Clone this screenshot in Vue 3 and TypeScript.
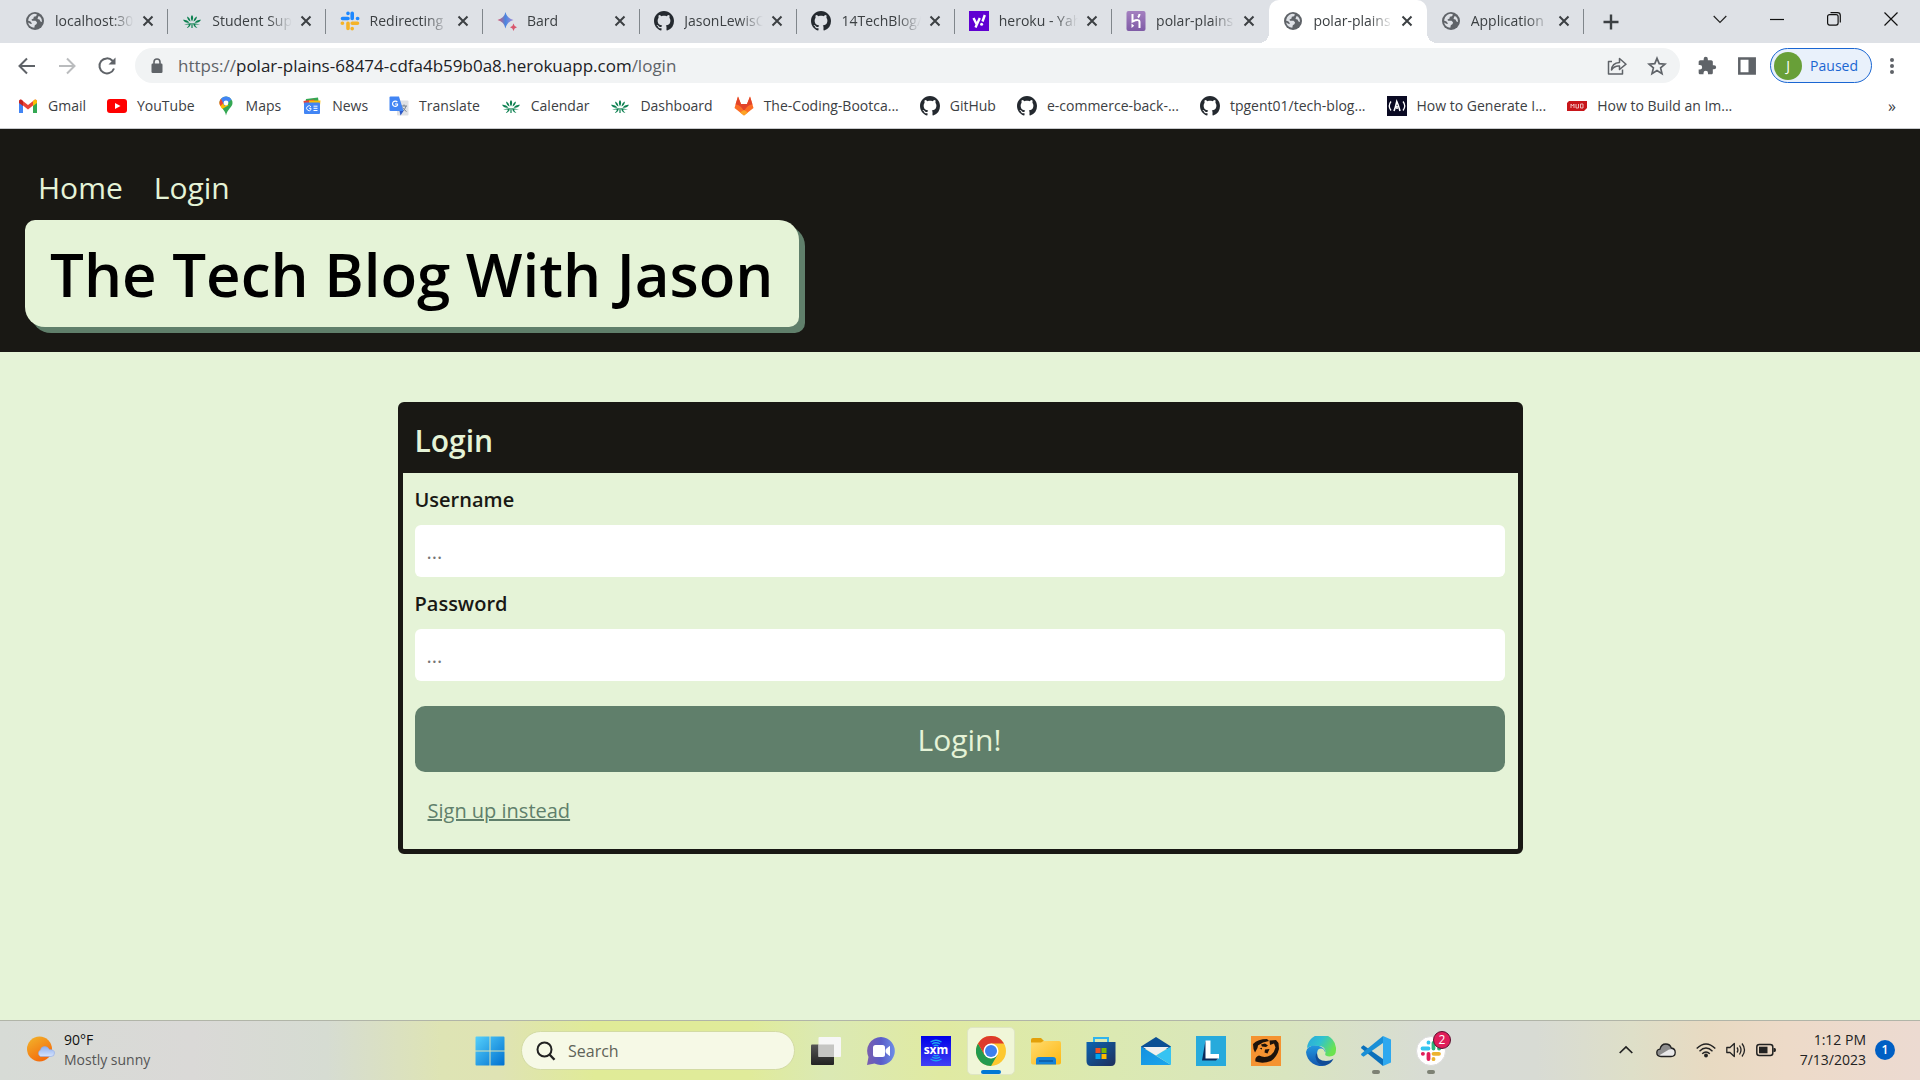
<script setup lang="ts">
import { ref } from 'vue'

interface Tab {
  title: string
  icon: string
  active?: boolean
}

interface Bookmark {
  label: string
  icon: string
}

interface TaskbarApp {
  name: string
  icon: string
  state?: 'focused' | 'running'
  badge?: number
}

const tabs: Tab[] = [
  { title: 'localhost:30', icon: 'globe' },
  { title: 'Student Sup', icon: 'lotus' },
  { title: 'Redirecting', icon: 'slack-loading' },
  { title: 'Bard', icon: 'bard' },
  { title: 'JasonLewisC', icon: 'github' },
  { title: '14TechBlog/', icon: 'github' },
  { title: 'heroku - Yah', icon: 'yahoo' },
  { title: 'polar-plains', icon: 'heroku' },
  { title: 'polar-plains', icon: 'globe', active: true },
  { title: 'Application', icon: 'globe' },
]

const bookmarks: Bookmark[] = [
  { label: 'Gmail', icon: 'gmail' },
  { label: 'YouTube', icon: 'youtube' },
  { label: 'Maps', icon: 'maps' },
  { label: 'News', icon: 'news' },
  { label: 'Translate', icon: 'translate' },
  { label: 'Calendar', icon: 'lotus' },
  { label: 'Dashboard', icon: 'lotus' },
  { label: 'The-Coding-Bootca...', icon: 'gitlab' },
  { label: 'GitHub', icon: 'github' },
  { label: 'e-commerce-back-...', icon: 'github' },
  { label: 'tpgent01/tech-blog...', icon: 'github' },
  { label: 'How to Generate I...', icon: 'fcc' },
  { label: 'How to Build an Im...', icon: 'muo' },
]

const apps: TaskbarApp[] = [
  { name: 'Task view', icon: 'taskview' },
  { name: 'Chat', icon: 'chat' },
  { name: 'SiriusXM', icon: 'sxm' },
  { name: 'Chrome', icon: 'chrome', state: 'focused' },
  { name: 'File Explorer', icon: 'explorer' },
  { name: 'Microsoft Store', icon: 'store' },
  { name: 'Mail', icon: 'mail' },
  { name: 'L', icon: 'lapp' },
  { name: 'Strong arm', icon: 'strong' },
  { name: 'Edge', icon: 'edge' },
  { name: 'VS Code', icon: 'vscode', state: 'running' },
  { name: 'Slack', icon: 'slack', state: 'running', badge: 2 },
]

const username = ref('')
const password = ref('')
</script>

<template>
  <div class="screen">
    <svg class="sprite" aria-hidden="true">
      <defs>
        <linearGradient id="g-bard" x1="0" y1="0" x2="1" y2="0">
          <stop offset="0" stop-color="#e0566a" /><stop offset=".5" stop-color="#4a86e0" /><stop offset="1" stop-color="#a78bd8" />
        </linearGradient>
        <linearGradient id="g-heroku" x1="0" y1="0" x2="0" y2="1">
          <stop offset="0" stop-color="#a480c0" /><stop offset="1" stop-color="#7f5ba6" />
        </linearGradient>
        <linearGradient id="g-win" x1="0" y1="0" x2="1" y2="1">
          <stop offset="0" stop-color="#55d0fb" /><stop offset="1" stop-color="#0070d0" />
        </linearGradient>
        <linearGradient id="g-sun" x1="0" y1="0" x2=".6" y2="1">
          <stop offset="0" stop-color="#f2b62c" /><stop offset="1" stop-color="#f46a0c" />
        </linearGradient>
        <linearGradient id="g-cloud" x1="0" y1="0" x2="0" y2="1">
          <stop offset="0" stop-color="#8fb0f0" /><stop offset="1" stop-color="#d5e2fb" />
        </linearGradient>
        <linearGradient id="g-chat" x1="0" y1="0" x2="1" y2="0">
          <stop offset="0" stop-color="#7a5fae" /><stop offset=".5" stop-color="#5a5cc8" /><stop offset="1" stop-color="#6d8ee8" />
        </linearGradient>
        <linearGradient id="g-sxm" x1="0" y1="0" x2="0" y2="1">
          <stop offset="0" stop-color="#0000e8" /><stop offset="1" stop-color="#4040f4" />
        </linearGradient>
        <linearGradient id="g-folder" x1="0" y1="0" x2="1" y2="1">
          <stop offset="0" stop-color="#ffdb6e" /><stop offset="1" stop-color="#fdb813" />
        </linearGradient>
        <linearGradient id="g-store" x1="0" y1="0" x2="1" y2="1">
          <stop offset="0" stop-color="#0c64b0" /><stop offset="1" stop-color="#1f2f5c" />
        </linearGradient>
        <linearGradient id="g-mail" x1="0" y1="0" x2="1" y2="1">
          <stop offset="0" stop-color="#1490df" /><stop offset="1" stop-color="#1aa6ec" />
        </linearGradient>
        <linearGradient id="g-edge-top" x1="0" y1="0" x2="1" y2=".5">
          <stop offset="0" stop-color="#2aa5de" /><stop offset=".5" stop-color="#30c2cf" /><stop offset="1" stop-color="#6be34f" />
        </linearGradient>
        <linearGradient id="g-edge-left" x1="0" y1="0" x2="0" y2="1">
          <stop offset="0" stop-color="#2398e0" /><stop offset="1" stop-color="#1256ae" />
        </linearGradient>
        <linearGradient id="g-dark" x1="0" y1="0" x2="0" y2="1">
          <stop offset="0" stop-color="#555" /><stop offset="1" stop-color="#222" />
        </linearGradient>
      </defs>

      <symbol id="i-globe" viewBox="0 0 20 20">
        <circle cx="10" cy="10" r="9" fill="#5f6368" />
        <path d="M4 6.500Q6 3 10 2.800L12 3.500 11 5.200 8.800 5.800 8.500 7.600 6.500 8.500 7 9.700H10.500L12 11.200 11.600 13 9.800 14.200 9.300 16.800Q4.500 16.500 3 11.500L6 13 7 12.500 5.500 10.500 3 9.500ZM13.300 5.200L15 5.500Q17.400 8 17 11L15.500 10.500 14.500 8.500 12.500 8Z" fill="#dee1e6" />
      </symbol>
      <symbol id="i-lotus" viewBox="0 0 20 20">
        <g fill="#0c8050">
          <path d="M10 4Q12.300 6.500 10 10.500Q7.700 6.500 10 4ZM5 5.500Q8 6.500 8.500 10.500Q5.500 9.500 5 5.500ZM15 5.500Q12 6.500 11.500 10.500Q14.500 9.500 15 5.500ZM1 8.700Q5 8.200 7.500 11.500Q3 12.500 1 8.700ZM19 8.700Q15 8.200 12.500 11.500Q17 12.500 19 8.700Z" />
          <path d="M2 13.800Q6 12 9 12.300Q8.500 16.500 4.500 17Q6.800 15 7 13.700Q5 13.500 2 13.800ZM18 13.800Q14 12 11 12.300Q11.500 16.500 15.500 17Q13.200 15 13 13.700Q15 13.500 18 13.800ZM9.400 12H10.600V17H9.400Z" />
        </g>
      </symbol>
      <symbol id="i-slack-loading" viewBox="0 0 20 20">
        <g stroke-width="3.600" stroke-linecap="round">
          <path d="M8 2.300V2.500M8 7.500H2.500M12.200 2.300V7.500M17.500 7.500H17.700" stroke="#1e88ff" />
          <path d="M2.300 12.300H2.500M8 12.300V17.500M12.200 12.300H17.500M12.200 17.500V17.700" stroke="#f5b328" />
        </g>
      </symbol>
      <symbol id="i-bard" viewBox="0 0 20 20">
        <path d="M8.500 1Q9.800 7.200 16.500 9Q9.800 10.800 8.500 17.500Q7.200 10.800 .5 9Q7.200 7.200 8.500 1Z" fill="url(#g-bard)" />
        <path d="M16.500 12.500Q17 15.500 20 16.200Q17 17 16.500 20Q16 17 13 16.200Q16 15.500 16.500 12.500Z" fill="#d8566c" />
      </symbol>
      <symbol id="i-github" viewBox="0 0 16 16">
        <path fill="#24292f" d="M8 0C3.580 0 0 3.580 0 8c0 3.540 2.290 6.530 5.470 7.590.4.070.55-.17.55-.38 0-.19-.01-.82-.01-1.490-2.010.37-2.530-.49-2.690-.94-.09-.23-.48-.94-.82-1.130-.28-.15-.68-.52-.01-.53.63-.01 1.080.58 1.230.82.72 1.210 1.870.87 2.330.66.07-.52.28-.87.51-1.070-1.780-.2-3.640-.89-3.640-3.950 0-.87.31-1.590.82-2.150-.08-.2-.36-1.020.08-2.120 0 0 .67-.21 2.200.82.64-.18 1.320-.27 2-.27s1.360.09 2 .27c1.530-1.040 2.200-.82 2.200-.82.44 1.100.16 1.920.08 2.120.51.56.82 1.270.82 2.150 0 3.070-1.870 3.750-3.650 3.950.29.25.54.73.54 1.480 0 1.070-.01 1.930-.01 2.200 0 .21.15.46.55.38A8.010 8.010 0 0 0 16 8c0-4.420-3.580-8-8-8z" />
      </symbol>
      <symbol id="i-yahoo" viewBox="0 0 20 20">
        <rect width="20" height="20" fill="#6001d2" />
        <path d="M4.500 7L7.500 13M10.800 7L6.500 16.500M15.800 4L13.500 10.500" stroke="#fff" stroke-width="2.400" fill="none" />
        <circle cx="12.600" cy="13.300" r="1.500" fill="#fff" />
      </symbol>
      <symbol id="i-heroku" viewBox="0 0 20 20">
        <rect x=".5" width="19" height="20" rx="2" fill="url(#g-heroku)" />
        <path d="M6.500 3V10.500Q13.500 7.500 13.500 11V17M13.500 3Q13.500 5 12 6.500" stroke="#fff" stroke-width="2" fill="none" />
        <path d="M5.500 12.500L8.200 14.800 5.500 17Z" fill="#fff" />
      </symbol>
      <symbol id="i-gmail" viewBox="0 0 20 20">
        <path d="M1 5V17H5V9Z" fill="#4285f4" /><path d="M19 5V17H15V9Z" fill="#34a853" />
        <path d="M1 5.500Q1 3.500 3 3.500L10 9 17 3.500Q19 3.500 19 5.500L15 9.500 10 13.500 5 9.500Z" fill="#ea4335" />
        <path d="M15 5L17 3.500Q19 3.500 19 5.500V7L15 10Z" fill="#fbbc04" /><path d="M1 5.500Q1 3.500 3 3.500L5 5V10L1 7Z" fill="#c5221f" />
      </symbol>
      <symbol id="i-youtube" viewBox="0 0 20 20">
        <rect y="3" width="20" height="14" rx="3" fill="#f00" /><path d="M8 7L13.500 10 8 13Z" fill="#fff" />
      </symbol>
      <symbol id="i-maps" viewBox="0 0 20 20">
        <path d="M10 .5A6.500 6.500 0 0 1 16.500 7C16.500 11.500 11.500 12.500 10 19.500C9.500 16.500 8 14.500 6.300 12.300L3.500 7A6.500 6.500 0 0 1 10 .5Z" fill="#34a853" />
        <path d="M5 2.800L12.500 9.200 6.300 13C4.800 11 3.500 9.300 3.500 7A6.500 6.500 0 0 1 5 2.800Z" fill="#fbbc04" />
        <path d="M5 2.800L8.500 6 4.500 10Q3.500 8.500 3.500 7A6.500 6.500 0 0 1 5 2.800Z" fill="#ea4335" />
        <path d="M5 2.800A6.500 6.500 0 0 1 15.500 3.500L8.500 10Z" fill="#4285f4" /><circle cx="10" cy="7" r="2.400" fill="#fff" />
      </symbol>
      <symbol id="i-news" viewBox="0 0 20 20">
        <path d="M4 3L16 1.500 17 8H3Z" fill="#34a853" /><path d="M1.500 5L12 3.500 13 8H2Z" fill="#ea4335" /><path d="M7 4.500L18.500 4.500 18 9H7Z" fill="#fbbc04" />
        <rect x="2" y="6.500" width="16" height="11.500" rx="1" fill="#4285f4" />
        <path d="M9 10.800A2.400 2.400 0 1 0 9 13.600V12.300H7M11.500 10.200H15.500M11.500 12.300H15.500M11.500 14.500H15.500" stroke="#fff" fill="none" />
      </symbol>
      <symbol id="i-translate" viewBox="0 0 20 20">
        <rect x="8" y="4.500" width="11.500" height="15" rx="1" fill="#dfe1e5" />
        <path d="M12 10H18M15 8.500V10M17 10Q16 14 13 16M13.500 11.500Q15 14 17.500 15.500" stroke="#76808c" fill="none" />
        <path d="M1.500 .5H10L14.500 15H1.500Q.5 15 .5 14V1.500Q.5 .5 1.500 .5Z" fill="#4285f4" /><path d="M10.500 15H14.500L11.500 19.500Z" fill="#2a56c6" />
        <path d="M8.300 6A2.700 2.700 0 1 0 8.500 9.200V8H6" stroke="#fff" stroke-width="1.200" fill="none" />
      </symbol>
      <symbol id="i-gitlab" viewBox="0 0 20 20">
        <path d="M10 19.500L.5 12 4 .5 7 8H13L16 .5 19.500 12Z" fill="#fc6d26" /><path d="M4 .5L7 8H13L16 .5 18.500 8.500Q14 8 10 15Q6 8 1.500 8.500Z" fill="#e24329" />
        <path d="M10 14L14 16.400 10 19.500 6 16.400Z" fill="#fca326" />
      </symbol>
      <symbol id="i-fcc" viewBox="0 0 20 20">
        <rect width="20" height="20" fill="#0a0a23" />
        <path d="M4 5.500Q.5 10 4 14.500M16 5.500Q19.500 10 16 14.500" stroke="#fff" stroke-width="1.300" fill="none" />
        <path d="M7 15Q8.500 11.500 9.800 5.500Q11.500 9 13 15M10 10V13" stroke="#fff" stroke-width="1.600" fill="none" />
      </symbol>
      <symbol id="i-muo" viewBox="0 0 20 20">
        <path d="M2 5H20V12L17 15H0V7Z" fill="#c8161a" />
        <path d="M4 12V8L5.500 10 7 8V12M9 8V12H11.500V8M13.500 8H16V12H13.500Z" stroke="#f3c9c9" stroke-width=".9" fill="none" />
      </symbol>

      <symbol id="i-close-small" viewBox="0 0 12 12"><path d="M1.500 1.500L10.500 10.500M10.500 1.500L1.500 10.500" stroke="#3c4043" stroke-width="2" /></symbol>
      <symbol id="i-back" viewBox="0 0 20 20"><path d="M18 10H3M10 2.500L2.500 10L10 17.500" stroke="currentColor" stroke-width="2" fill="none" /></symbol>
      <symbol id="i-reload" viewBox="0 0 20 20">
        <path d="M17 12.500A7.500 7.500 0 1 1 15.500 4.800L17 6.500" stroke="#5f6368" stroke-width="2" fill="none" /><path d="M18.500 1.500V8.500H11.500Z" fill="#5f6368" />
      </symbol>
      <symbol id="i-lock" viewBox="0 0 12 16">
        <rect x=".5" y="5.500" width="11" height="9.500" rx="1.200" fill="#5f6368" /><path d="M3 6V4A3 3 0 0 1 9 4V6" stroke="#5f6368" stroke-width="1.600" fill="none" />
      </symbol>
      <symbol id="i-share" viewBox="0 0 20 20">
        <path d="M5 5.500H1.500V18H15.500V13.500M4.500 14Q5 7 12.500 6.500V2.500L19 8.200 12.500 13.500V10Q7.500 9.500 4.500 14Z" stroke="#5f6368" stroke-width="1.500" fill="none" stroke-linejoin="round" />
      </symbol>
      <symbol id="i-star" viewBox="0 0 20 20"><path d="M10 2.300L12.200 7.600L18 8.100L13.600 11.900L15 17.600L10 14.500L5 17.600L6.400 11.900L2 8.100L7.800 7.600Z" stroke="#5f6368" stroke-width="1.700" fill="none" /></symbol>
      <symbol id="i-puzzle" viewBox="0 0 24 24">
        <path fill="#5f6368" d="M20.500 11H19V7c0-1.100-.9-2-2-2h-4V3.500a2.500 2.500 0 0 0-5 0V5H4c-1.100 0-2 .9-2 2v3.800h1.500a2.700 2.700 0 0 1 0 5.400H2V20c0 1.100.9 2 2 2h3.800v-1.500a2.700 2.700 0 0 1 5.400 0V22H17c1.100 0 2-.9 2-2v-4h1.500a2.500 2.500 0 0 0 0-5z" />
      </symbol>
      <symbol id="i-panel" viewBox="0 0 20 20"><path d="M2.300 2.500H17.700V17.500H2.300Z" stroke="#5f6368" stroke-width="2.500" fill="none" /><path d="M11.500 3H18V17H11.500Z" fill="#5f6368" /></symbol>
      <symbol id="i-dots" viewBox="0 0 20 20"><g fill="#5f6368"><circle cx="10" cy="4" r="2" /><circle cx="10" cy="10" r="2" /><circle cx="10" cy="16" r="2" /></g></symbol>
      <symbol id="i-plus" viewBox="0 0 16 16"><path d="M8 .5V15.500M.5 8H15.500" stroke="#3c4043" stroke-width="2.400" /></symbol>
      <symbol id="i-chevron" viewBox="0 0 14 14"><path d="M.7 4L7 10.300 13.300 4" stroke="#222" stroke-width="1.200" fill="none" /></symbol>
      <symbol id="i-min" viewBox="0 0 14 14"><path d="M0 7.500H14" stroke="#111" stroke-width="1.200" /></symbol>
      <symbol id="i-max" viewBox="0 0 14 14"><rect x=".6" y="2.600" width="10.500" height="10.500" rx="2" stroke="#111" stroke-width="1.200" fill="none" /><path d="M3.500 .7H10.500Q13.300 .7 13.300 3.500V10.500" stroke="#111" stroke-width="1.200" fill="none" /></symbol>
      <symbol id="i-x" viewBox="0 0 14 14"><path d="M.5 .5L13.500 13.500M13.500 .5L.5 13.500" stroke="#111" stroke-width="1.200" /></symbol>

      <symbol id="i-weather" viewBox="0 0 30 30">
        <circle cx="13.500" cy="14" r="12.500" fill="url(#g-sun)" />
        <path d="M14.500 21.500A3.600 3.600 0 0 1 14.500 15Q15 11.500 18.700 11.500Q22 11.500 23.200 14.500Q28.500 14.500 28.500 18Q28.500 21.500 25 21.500Z" fill="url(#g-cloud)" stroke="#8fa9e6" stroke-width=".6" />
      </symbol>
      <symbol id="i-start" viewBox="0 0 30 30">
        <path d="M.5 1.500Q.5 .5 1.500 .5H14.500V14.500H.5ZM15.500 .5H28.500Q29.500 .5 29.500 1.500V14.500H15.500ZM.5 15.500H14.500V29.500H1.500Q.5 29.500 .5 28.500ZM15.500 15.500H29.500V28.500Q29.500 29.500 28.500 29.500H15.500Z" fill="url(#g-win)" />
      </symbol>
      <symbol id="i-search" viewBox="0 0 20 20"><circle cx="8.500" cy="8.500" r="7" stroke="#222" stroke-width="2" fill="none" /><path d="M13.500 13.500L18.500 18.800" stroke="#222" stroke-width="2.400" /></symbol>
      <symbol id="i-taskview" viewBox="0 0 30 30">
        <rect y="8.500" width="23" height="20.500" rx="1" fill="url(#g-dark)" /><rect x="7.500" y="1" width="22.500" height="20" rx="1" fill="#f6f6f6" /><path d="M7.500 8.500H23V21H7.500Z" fill="#c5c5c3" />
      </symbol>
      <symbol id="i-chat" viewBox="0 0 30 30">
        <path d="M15 1A14 14 0 1 1 8.500 27.500L1 29 2.500 21A14 14 0 0 1 15 1Z" fill="url(#g-chat)" /><rect x="7" y="9" width="12" height="12" rx="2.500" fill="#fff" /><path d="M20 13.500L23.500 10.500V19.500L20 16.500Z" fill="#fff" stroke="#fff" stroke-linejoin="round" />
      </symbol>
      <symbol id="i-sxm" viewBox="0 0 30 30">
        <rect width="30" height="30" fill="url(#g-sxm)" />
        <path d="M9.500 6Q15 2.500 20.500 6M11 8Q15 5.500 19 8M12.500 10Q15 8.500 17.500 10M9.500 23Q15 26.500 20.500 23M11 21Q15 23.500 19 21M12.500 19.200Q15 20.500 17.500 19.200" stroke="#1ba5f0" stroke-width="1.300" fill="none" />
        <text x="15" y="18" font-size="12" font-weight="700" fill="#fff" text-anchor="middle">sxm</text>
      </symbol>
      <symbol id="i-chrome" viewBox="0 0 30 30">
        <circle cx="15" cy="15" r="15" fill="#fdc82f" />
        <path d="M2 7.500L8.500 18.800 15 22.500 21.500 18.800 15 30A15 15 0 0 1 2 7.500Z" fill="#239a4f" />
        <path d="M2 7.500A15 15 0 0 1 28 7.500H15L8.500 18.800Z" fill="#dd3a2c" />
        <circle cx="15" cy="15" r="7.500" fill="#fff" /><circle cx="15" cy="15" r="6" fill="#3d7fee" />
      </symbol>
      <symbol id="i-explorer" viewBox="0 0 30 30">
        <path d="M0 4Q0 2 2 2H10L13 5V9H0Z" fill="#e3a008" /><path d="M0 6.500H10L12.500 5H28Q30 5 30 7V26.500Q30 28.500 28 28.500H2Q0 28.500 0 26.500Z" fill="url(#g-folder)" />
        <path d="M5 28.500V24Q5 21 8 21H22Q25 21 25 24V28.500Z" fill="#1583d8" /><path d="M8 25H22" stroke="#0b57a0" stroke-width="1.400" />
      </symbol>
      <symbol id="i-store" viewBox="0 0 30 30">
        <path d="M8 7V2H22V7" stroke="#2fb4ee" stroke-width="2" fill="none" /><path d="M.5 6H29.500V25Q29.500 30 25 30H5Q.5 30 .5 25Z" fill="url(#g-store)" />
        <path d="M9.500 12H14.500V17H9.500Z" fill="#f25022" /><path d="M15.500 12H20.500V17H15.500Z" fill="#7fba00" /><path d="M9.500 18H14.500V23H9.500Z" fill="#00a4ef" /><path d="M15.500 18H20.500V23H15.500Z" fill="#ffb900" />
      </symbol>
      <symbol id="i-mail" viewBox="0 0 30 30">
        <path d="M0 10.500L15 1 30 10.500V13H0Z" fill="#0b4f94" /><path d="M2 11H28L16 19H14Z" fill="#f0f0f0" /><path d="M0 10.500L30 29H0Z" fill="url(#g-mail)" /><path d="M30 10.500V29L15 19.500Z" fill="#36c3f2" />
      </symbol>
      <symbol id="i-lapp" viewBox="0 0 30 30">
        <rect width="30" height="30" fill="#27aadc" /><path d="M9.500 4.500L6 24.500H20L23 21H13Z" fill="#0a2a5c" />
        <path d="M9.500 4.500H14.500V18H23V22.500H9.500Z" fill="#fff" />
      </symbol>
      <symbol id="i-strong" viewBox="0 0 30 30">
        <rect width="30" height="30" fill="#f59331" />
        <path d="M2 8Q7 3 16 3L18 5 12 6.500 7 9.500 6.500 12 4 16.500 2.500 13ZM18.500 4.500L25 4 27.500 7 28 13Q26 21 20 25Q12 28 4.500 25.500Q3.500 21 8 19.500Q14 22.500 20 19Q23.500 16 24.500 11.500L23 7.500 19 9ZM10 8.500L14 7.500 17 9.500 15 11 11 10.500ZM8.500 12.500L11 11.800 11 13.500ZM14 13.500L18.500 13 16.500 17.500 13.500 16.500Z" fill="#1c130c" />
      </symbol>
      <symbol id="i-edge" viewBox="0 0 30 30">
        <path d="M1 12A14.500 14.500 0 0 1 30 14Q30 20.500 23.500 20.500Q18 20.500 19.500 17Q20 10.500 13 10Q5 9 1 12Z" fill="url(#g-edge-top)" />
        <path d="M0 16Q1 9.500 9 9.500Q18 10 19.500 16Q12 11 11 18Q10.500 25 20 29.200A15 15 0 0 1 0 16Z" fill="url(#g-edge-left)" />
        <path d="M11 17Q11 25 20 25Q24 25 27.500 22.800Q25 28 20 29.200Q11 30 9.500 21Q9.500 18 11 17Z" fill="#104c97" />
        <circle cx="15" cy="16" r="3.600" fill="#d9e8b8" />
      </symbol>
      <symbol id="i-vscode" viewBox="0 0 30 30">
        <path d="M22 0L30 3.500V26.500L22 30Z" fill="#2ea8ef" />
        <path d="M22 30L.5 12.500Q-.3 11.500 .5 10.700L2.500 9.200 22 23Z" fill="#0b70bb" />
        <path d="M22 0L.5 17.500Q-.3 18.500 .5 19.300L2.500 20.800 22 7Z" fill="#1a8fd6" />
      </symbol>
      <symbol id="i-slack" viewBox="0 0 30 30">
        <circle cx="15" cy="15" r="14.500" fill="#fff" stroke="#dcdcdc" />
        <g stroke-width="3.800" stroke-linecap="round">
          <path d="M12.500 6.500V6.700M12.500 12.500H6.500" stroke="#36c5f0" /><path d="M17.500 7V12.500M23 12.500H23.200" stroke="#2eb67d" />
          <path d="M6.800 17.800H7M12.500 17.800V23" stroke="#e01e5a" /><path d="M17.500 17.800H23M17.500 23V23.200" stroke="#ecb22e" />
        </g>
      </symbol>
      <symbol id="i-up" viewBox="0 0 14 14"><path d="M.7 10L7 4 13.300 10" stroke="#222" stroke-width="1.700" fill="none" /></symbol>
      <symbol id="i-onedrive" viewBox="0 0 20 20">
        <path d="M5 16.500Q.8 16.500 .8 12.800Q.8 9.500 4 9.200Q5 4 9.800 4Q14 4 15.300 8Q19.200 8.500 19.200 12.500Q19.200 16.500 15 16.500Z" fill="#8d8d8d" />
        <path d="M3 15.500L13 9.500Q19.200 8 19.200 12.500Q19.200 16.500 15 16.500H5Z" fill="#e9e9e9" />
        <path d="M5 16.500Q.8 16.500 .8 12.800Q.8 9.500 4 9.200Q5 4 9.800 4Q14 4 15.300 8Q19.200 8.500 19.200 12.500Q19.200 16.500 15 16.500Z" fill="none" stroke="#222" stroke-width="1.300" />
      </symbol>
      <symbol id="i-wifi" viewBox="0 0 20 20">
        <path d="M.7 8.500Q10 -.5 19.300 8.500M3.500 11.200Q10 4.800 16.500 11.200M6.200 13.800Q10 10.200 13.800 13.800" stroke="#222" stroke-width="1.400" fill="none" /><circle cx="10" cy="15.500" r="1.900" fill="#222" />
      </symbol>
      <symbol id="i-sound" viewBox="0 0 20 20">
        <path d="M.8 7.500H4L8.300 3.500V16.500L4 12.500H.8ZM11 7.500Q12.800 10 11 12.500M13.500 5.500Q16.500 10 13.500 14.500M16 3.500Q21 10 16 16.500" stroke="#222" stroke-width="1.300" fill="none" stroke-linejoin="round" />
      </symbol>
      <symbol id="i-battery" viewBox="0 0 20 20">
        <rect x=".8" y="4.500" width="16" height="11" rx="2.500" stroke="#222" stroke-width="1.500" fill="none" /><rect x="3" y="6.700" width="8.500" height="6.600" fill="#222" /><path d="M17.500 8H18.500Q20 8 20 10Q20 12 18.500 12H17.500Z" fill="#222" />
      </symbol>
    </svg>

    <div class="browser">
      <div class="tabstrip">
        <div class="tabs" role="tablist">
          <div v-for="(tab, i) in tabs" :key="i" class="tab" :class="{ active: tab.active, before: tabs[i + 1]?.active }" role="tab">
            <svg class="fav"><use :href="'#i-' + tab.icon" /></svg>
            <span class="tab-title">{{ tab.title }}</span>
            <button class="tab-close" aria-label="Close tab"><svg><use href="#i-close-small" /></svg></button>
          </div>
        </div>
        <button class="new-tab" aria-label="New tab"><svg><use href="#i-plus" /></svg></button>
        <div class="window-controls">
          <button aria-label="Search tabs"><svg><use href="#i-chevron" /></svg></button>
          <button aria-label="Minimize"><svg><use href="#i-min" /></svg></button>
          <button aria-label="Restore"><svg><use href="#i-max" /></svg></button>
          <button aria-label="Close"><svg><use href="#i-x" /></svg></button>
        </div>
      </div>

      <div class="toolbar">
        <button class="tool" aria-label="Back"><svg><use href="#i-back" /></svg></button>
        <button class="tool forward" aria-label="Forward"><svg><use href="#i-back" /></svg></button>
        <button class="tool" aria-label="Reload"><svg><use href="#i-reload" /></svg></button>
        <div class="omnibox">
          <svg class="lock"><use href="#i-lock" /></svg>
          <div class="url">https://<b>polar-plains-68474-cdfa4b59b0a8.herokuapp.com</b>/login</div>
          <button class="tool" aria-label="Share"><svg><use href="#i-share" /></svg></button>
          <button class="tool" aria-label="Bookmark"><svg><use href="#i-star" /></svg></button>
        </div>
        <button class="tool" aria-label="Extensions"><svg><use href="#i-puzzle" /></svg></button>
        <button class="tool" aria-label="Side panel"><svg><use href="#i-panel" /></svg></button>
        <button class="profile"><span class="avatar">J</span>Paused</button>
        <button class="tool" aria-label="Menu"><svg><use href="#i-dots" /></svg></button>
      </div>

      <nav class="bookmarks" aria-label="Bookmarks">
        <a v-for="mark in bookmarks" :key="mark.label" class="bookmark" href="#">
          <svg class="fav"><use :href="'#i-' + mark.icon" /></svg>{{ mark.label }}
        </a>
        <button class="more" aria-label="More bookmarks">»</button>
      </nav>
    </div>

    <div class="page">
      <header class="site-header">
        <nav class="site-nav">
          <a href="#">Home</a>
          <a href="#">Login</a>
        </nav>
        <h1>The Tech Blog With Jason</h1>
      </header>
      <main>
        <section class="card">
          <h2>Login</h2>
          <form @submit.prevent>
            <label for="username">Username</label>
            <input id="username" v-model="username" type="text" placeholder="..." />
            <label for="password">Password</label>
            <input id="password" v-model="password" type="password" placeholder="..." />
            <button class="submit" type="submit">Login!</button>
          </form>
          <a class="signup" href="#">Sign up instead</a>
        </section>
      </main>
    </div>

    <footer class="taskbar">
      <div class="weather">
        <svg><use href="#i-weather" /></svg>
        <div><div class="temp">90°F</div><div class="sky">Mostly sunny</div></div>
      </div>
      <div class="dock">
        <button class="app start" aria-label="Start"><svg><use href="#i-start" /></svg></button>
        <label class="search"><svg><use href="#i-search" /></svg><input type="text" placeholder="Search" aria-label="Search" /></label>
        <button v-for="app in apps" :key="app.name" class="app" :class="app.state" :aria-label="app.name">
          <svg><use :href="'#i-' + app.icon" /></svg>
          <span v-if="app.badge" class="badge">{{ app.badge }}</span>
        </button>
      </div>
      <div class="tray">
        <svg class="up"><use href="#i-up" /></svg>
        <svg class="drive"><use href="#i-onedrive" /></svg>
        <div class="status">
          <svg><use href="#i-wifi" /></svg>
          <svg><use href="#i-sound" /></svg>
          <svg><use href="#i-battery" /></svg>
        </div>
        <div class="clock"><div>1:12 PM</div><div>7/13/2023</div></div>
        <span class="notice">1</span>
      </div>
    </footer>
  </div>
</template>

<style>
body {
  margin: 0;
}
</style>

<style scoped>
* {
  box-sizing: border-box;
}

.screen {
  display: flex;
  flex-direction: column;
  min-height: 100vh;
  font-family: 'Open Sans', 'Noto Sans', sans-serif;
  color: #3c4043;
}

.sprite {
  position: absolute;
  width: 0;
  height: 0;
}

button {
  display: flex;
  align-items: center;
  justify-content: center;
  flex: none;
  padding: 0;
  border: 0;
  background: none;
  color: inherit;
  font-family: inherit;
}

svg {
  display: block;
  flex: none;
  width: 20px;
  height: 20px;
}

a {
  color: inherit;
  text-decoration: none;
}

/* Browser frame */
.browser {
  border-bottom: 1px solid #c8cacd;
  background: #fff;
}

.tabstrip {
  display: flex;
  height: 43px;
  padding-left: 11px;
  background: #dee1e6;
}

.tabs {
  display: flex;
  flex: 0 1 1573px;
  min-width: 0;
}

.tab {
  position: relative;
  display: flex;
  flex: 1 1 0;
  align-items: center;
  min-width: 0;
  padding: 0 14px 2px 14px;
  font-size: 14px;
}

.tab::after {
  content: '';
  position: absolute;
  top: 9px;
  right: 0;
  width: 1px;
  height: 25px;
  background: #80868b;
}

.tab.active {
  border-radius: 10px 10px 0 0;
  background: #fff;
}

.tab.active::after,
.tab.before::after {
  top: auto;
  bottom: 0;
  width: 10px;
  height: 10px;
}

.tab.active::after {
  right: -10px;
  background: radial-gradient(circle at 100% 0, #dee1e6 10px, #fff 10px);
}

.tab.before::after {
  background: radial-gradient(circle at 0 0, #dee1e6 10px, #fff 10px);
}

.tab-title {
  flex: 1;
  overflow: hidden;
  margin: 0 8px 0 10px;
  white-space: nowrap;
  mask-image: linear-gradient(90deg, #000 70%, transparent);
}

.tab-close svg {
  width: 12px;
  height: 12px;
}

.new-tab {
  width: 54px;
}

.new-tab svg {
  width: 16px;
  height: 16px;
}

.window-controls {
  display: flex;
  margin-left: auto;
  padding-right: 1px;
}

.window-controls button {
  width: 57px;
  padding-bottom: 6px;
}

.window-controls svg {
  width: 14px;
  height: 14px;
}

.toolbar {
  display: flex;
  align-items: center;
  height: 45px;
  padding: 0 8px 0 7px;
}

.tool {
  width: 40px;
  height: 34px;
  color: #5f6368;
}

.forward {
  color: #babcbe;
  transform: scaleX(-1);
}

.omnibox {
  display: flex;
  flex: 1;
  align-items: center;
  height: 35px;
  margin: 0 7px 0 8px;
  padding: 0 3px 0 16px;
  border-radius: 18px;
  background: #f1f3f4;
}

.lock {
  width: 12px;
  height: 16px;
}

.url {
  flex: 1;
  margin-left: 15px;
  color: #5f6368;
  font-size: 17px;
}

.url b {
  color: #202124;
  font-weight: 400;
}

.profile {
  gap: 8px;
  height: 35px;
  margin-left: 3px;
  padding: 0 13px 0 3px;
  border: 1px solid #1a66d2;
  border-radius: 18px;
  background: #e9f1fb;
  color: #1a66d2;
  font-size: 14px;
}

.avatar {
  width: 28px;
  height: 28px;
  border-radius: 50%;
  background: #689f38;
  color: #fff;
  font-size: 14px;
  line-height: 28px;
}

.bookmarks {
  display: flex;
  align-items: center;
  gap: 21px;
  height: 40px;
  padding: 0 24px 5px 18px;
  font-size: 14px;
  white-space: nowrap;
}

.bookmark {
  display: flex;
  align-items: center;
  gap: 10px;
}

.more {
  margin-left: auto;
  font-size: 16px;
}

/* Blog page */
.page {
  flex: 1;
  background: #e5f3d7;
  color: #191814;
}

.site-header {
  padding: 34px 25px 25px;
  background: #191814;
}

.site-nav {
  display: flex;
  gap: 6px;
  color: #e5f3d7;
  font-size: 30px;
  line-height: 41px;
}

.site-nav a {
  padding: 4px 12px 12px 13px;
}

h1 {
  width: fit-content;
  margin: 0;
  padding: 13px 25px 12px;
  border-radius: 10px 20px;
  background: #e5f3d7;
  box-shadow: 6px 6px 0 #607f6b;
  color: #000;
  font-size: 60px;
  font-weight: 600;
  line-height: 82px;
}

main {
  padding: 50px 25px;
}

.card {
  max-width: 1125px;
  margin: 0 auto;
  border: 5px solid #191814;
  border-radius: 6px;
}

h2 {
  margin: 0;
  padding: 14px 12px 12px;
  background: #191814;
  color: #e5f3d7;
  font-size: 30px;
  font-weight: 600;
  line-height: 40px;
}

form {
  display: flex;
  flex-direction: column;
  padding: 0 13px 0 12px;
}

form label {
  padding: 13px 0 11px;
  font-size: 20px;
  font-weight: 600;
  line-height: 28px;
}

input {
  font-family: inherit;
}

form input {
  height: 52px;
  padding: 0 12px;
  border: 0;
  border-radius: 6px;
  background: #fff;
  font-size: 20px;
}

form input::placeholder {
  color: #757575;
}

.submit {
  height: 66px;
  margin-top: 25px;
  border-radius: 10px;
  background: #607f6b;
  color: #e5f3d7;
  font-size: 30px;
}

.signup {
  display: inline-block;
  margin: 25px;
  color: #607f6b;
  font-size: 20px;
  line-height: 27px;
  text-decoration: underline;
}

/* Windows taskbar */
.taskbar {
  display: flex;
  align-items: center;
  justify-content: space-between;
  height: 60px;
  border-top: 1px solid #b1b5a8;
  background: linear-gradient(90deg, #d7dbd6 0, #dad9d7 10%, #d6dcd2 17%, #dee4b4 23%, #dfe3b4 26%, #e0eb97 31%, #e0eb9a 39%, #dbe9b4 43%, #e0eaa2 49%, #dbe9b2 58%, #d9e5bf 67%, #d8dbd6 75%, #d8dbd4 80%, #dedfc8 85%, #e8dac2 89%, #eddac8 93%, #ecdad1 100%);
}

.weather {
  display: flex;
  align-items: center;
  flex: 1 1 0;
  gap: 8px;
  padding: 0 0 2px 26px;
  font-size: 14px;
  line-height: 20px;
}

.weather svg {
  width: 30px;
  height: 30px;
}

.temp {
  color: #111;
}

.sky {
  color: #555;
}

.dock {
  display: flex;
  align-items: center;
  gap: 7px;
}

.app {
  position: relative;
  width: 48px;
  height: 48px;
  border: 1px solid transparent;
  border-radius: 5px;
}

.app svg {
  width: 30px;
  height: 30px;
}

.focused {
  border-color: #dfe6c4;
  background: #f0f6d8;
}

.focused::after,
.running::after {
  content: '';
  position: absolute;
  bottom: 0;
  width: 8px;
  height: 4px;
  border-radius: 2px;
  background: #7d8174;
}

.focused::after {
  width: 20px;
  background: #0078d4;
}

.badge {
  position: absolute;
  top: 3px;
  right: 3px;
  width: 18px;
  height: 18px;
  border: 1px solid #5c1230;
  border-radius: 50%;
  background: #e01e5a;
  color: #fff;
  font-size: 12px;
  line-height: 16px;
}

.search {
  display: flex;
  align-items: center;
  gap: 12px;
  width: 274px;
  height: 39px;
  padding: 0 14px;
  border: 1px solid #d3dba4;
  border-radius: 20px;
  background: #f6f9e6;
}

.search input {
  width: 100%;
  padding: 0;
  border: 0;
  background: none;
  font-size: 16px;
}

.search input::placeholder {
  color: #5f6358;
}

.tray {
  display: flex;
  align-items: center;
  justify-content: flex-end;
  flex: 1 1 0;
  padding: 0 25px 2px 0;
  color: #222;
}

.tray .up {
  width: 14px;
  height: 14px;
  margin-right: 23px;
}

.tray .drive {
  margin-right: 20px;
}

.status {
  display: flex;
  gap: 10px;
  margin-right: 24px;
}

.clock {
  font-size: 14px;
  line-height: 20px;
  text-align: right;
}

.notice {
  width: 20px;
  height: 20px;
  margin-left: 9px;
  border-radius: 50%;
  background: #005fc4;
  color: #fff;
  font-size: 12px;
  font-weight: 600;
  line-height: 20px;
  text-align: center;
}
</style>
